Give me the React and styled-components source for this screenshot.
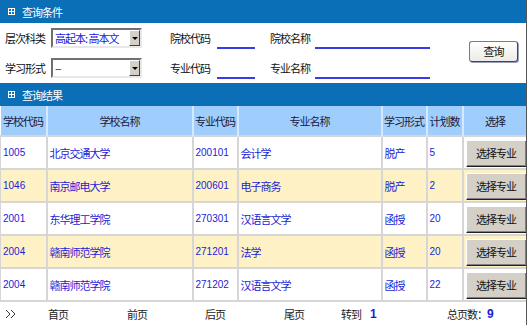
import styled, { createGlobalStyle } from "styled-components";

const GlobalStyle = createGlobalStyle`
  body {
    margin: 0;
    background: #fff;
    font-family: "Noto Sans CJK SC", "Liberation Sans", sans-serif;
    font-size: 11px;
  }
`;

const rows = [
  { school: "1005", name: "北京交通大学", code: "200101", major: "会计学", form: "脱产", plan: "5" },
  { school: "1046", name: "南京邮电大学", code: "200601", major: "电子商务", form: "脱产", plan: "2" },
  { school: "2001", name: "东华理工学院", code: "270301", major: "汉语言文学", form: "函授", plan: "20" },
  { school: "2004", name: "赣南师范学院", code: "271201", major: "法学", form: "函授", plan: "20" },
  { school: "2004", name: "赣南师范学院", code: "271202", major: "汉语言文学", form: "函授", plan: "22" },
];

function BoxIcon() {
  return (
    <svg width="7" height="7" viewBox="0 0 7 7">
      <rect x="0.5" y="0.5" width="6" height="6" fill="none" stroke="#fff" />
      <path d="M3.5 1v5M1 3.5h5" stroke="#fff" />
    </svg>
  );
}

function App() {
  return (
    <Page>
      <GlobalStyle />
      <Bar>
        <BoxIcon />
        <span>查询条件</span>
      </Bar>
      <Form>
        <Label>层次科类</Label>
        <Select>
          <span>高起本: 高本文</span>
          <Arrow />
        </Select>
        <Label $col={4}>院校代码</Label>
        <Line $col={5} />
        <Label $col={7}>院校名称</Label>
        <Line $col={8} />
        <QueryButton>查询</QueryButton>
        <Label>学习形式</Label>
        <Select>
          <span>--</span>
          <Arrow />
        </Select>
        <Label $col={4}>专业代码</Label>
        <Line $col={5} />
        <Label $col={7}>专业名称</Label>
        <Line $col={8} />
      </Form>
      <Bar>
        <BoxIcon />
        <span>查询结果</span>
      </Bar>
      <Table>
        <colgroup>
          <col width="46" />
          <col width="146" />
          <col width="45" />
          <col width="144" />
          <col width="45" />
          <col width="36" />
          <col width="64" />
        </colgroup>
        <thead>
          <tr>
            <Th>学校代码</Th>
            <Th>学校名称</Th>
            <Th>专业代码</Th>
            <Th>专业名称</Th>
            <Th>学习形式</Th>
            <Th>计划数</Th>
            <Th>选择</Th>
          </tr>
        </thead>
        <tbody>
          {rows.map((r, i) => (
            <Tr key={i} $alt={i % 2 === 1}>
              <Td $num>{r.school}</Td>
              <Td>{r.name}</Td>
              <Td $num>{r.code}</Td>
              <Td>{r.major}</Td>
              <Td>{r.form}</Td>
              <Td $num>{r.plan}</Td>
              <Td>
                <PickButton>选择专业</PickButton>
              </Td>
            </Tr>
          ))}
        </tbody>
      </Table>
      <Footer>
        <Chevrons width="12" height="10" viewBox="0 0 12 10">
          <path d="M1 1l4 4-4 4M6 1l4 4-4 4" fill="none" stroke="#334" strokeWidth="1" />
        </Chevrons>
        <FootLink $w={79}>首页</FootLink>
        <FootLink $w={78}>前页</FootLink>
        <FootLink $w={79}>后页</FootLink>
        <FootLink $w={57}>尾页</FootLink>
        <FootLink $w={29}>转到</FootLink>
        <PageNum $w={77}>1</PageNum>
        <FootLink>总页数：</FootLink>
        <PageNum>9</PageNum>
      </Footer>
    </Page>
  );
}

export default App;

const Page = styled.div`
  width: 526px;
  height: 325px;
  border-right: 1px solid #555;
  overflow: hidden;
`;

const Bar = styled.div`
  height: 23px;
  background: #0a6fb7;
  color: #fff;
  display: flex;
  align-items: center;
  gap: 7px;
  padding-left: 8px;
  font-size: 11px;
  letter-spacing: -1px;
`;

const Form = styled.div`
  height: 60px;
  box-sizing: border-box;
  padding: 4px 0 0 5px;
  display: grid;
  grid-template-columns: 46px 91px 28px 47px 38px 15px 45px 115px 39px 49px;
  grid-template-rows: 21px 21px;
  row-gap: 9px;
  align-items: center;
  color: #111;
`;

const Label = styled.div`
  grid-column: ${(p) => p.$col || 1};
  letter-spacing: -1px;
  white-space: nowrap;
`;

const Select = styled.div`
  grid-column: 2;
  height: 20px;
  box-sizing: border-box;
  border: 2px solid;
  border-color: #707070 #e8e8e8 #e8e8e8 #707070;
  background: #fff;
  display: flex;
  align-items: center;
  justify-content: space-between;
  color: #1818e0;
  letter-spacing: -1px;
  padding-left: 2px;
  white-space: nowrap;
`;

const Arrow = styled.div`
  flex: none;
  width: 11px;
  height: 16px;
  box-sizing: border-box;
  background: #d4d0c8;
  border: 1px solid;
  border-color: #fff #404040 #404040 #fff;
  position: relative;
  &::after {
    content: "";
    position: absolute;
    left: 2px;
    top: 6px;
    border-left: 3px solid transparent;
    border-right: 3px solid transparent;
    border-top: 3px solid #000;
  }
`;

const Line = styled.div`
  grid-column: ${(p) => p.$col};
  align-self: end;
  height: 0;
  border-bottom: 2px solid #3a3ae6;
  margin-bottom: -1px;
`;

const QueryButton = styled.button`
  grid-column: 10;
  grid-row: 1 / 3;
  align-self: center;
  width: 49px;
  height: 21px;
  margin-top: -3px;
  padding: 0;
  font-family: inherit;
  font-size: 11px;
  letter-spacing: -1px;
  color: #111;
  background: linear-gradient(#fff, #ecebe6);
  border: 1px solid #6d7ba8;
  border-right-color: #3b4666;
  border-bottom-color: #3b4666;
  border-radius: 3px;
  box-shadow: 1px 1px 0 #9aa0b8;
`;

const Table = styled.table`
  width: 526px;
  table-layout: fixed;
  border-collapse: collapse;
`;

const Th = styled.th`
  height: 29px;
  padding: 0;
  background: #9fcdfc;
  color: #1a1a3a;
  font-weight: normal;
  letter-spacing: -1px;
  white-space: nowrap;
  text-align: center;
  border-left: 2px solid #d4e8ff;
  &:first-child {
    border-left: none;
  }
`;

const Tr = styled.tr`
  background: ${(p) => (p.$alt ? "#fff1c6" : "#fff")};
`;

const Td = styled.td`
  height: 33px;
  padding: 0 0 0 2px;
  box-sizing: border-box;
  border: 2px solid #d6d6d6;
  border-right: none;
  color: #1c1cd6;
  white-space: nowrap;
  font-family: ${(p) => (p.$num ? '"Liberation Sans", sans-serif' : "inherit")};
  font-size: ${(p) => (p.$num ? "10px" : "11px")};
  letter-spacing: ${(p) => (p.$num ? "0" : "-1px")};
  &:first-child {
    border-left: 1px solid #d6d6d6;
  }
`;

const PickButton = styled.button`
  width: 61px;
  height: 27px;
  margin-top: 1px;
  padding: 0;
  font-family: inherit;
  font-size: 11px;
  letter-spacing: -1px;
  color: #111;
  background: #d4d0c8;
  border: 1px solid;
  border-color: #fff #202020 #202020 #fff;
  box-shadow: inset -1px -1px 0 #808080;
`;

const Footer = styled.div`
  height: 23px;
  display: flex;
  align-items: center;
  padding-left: 5px;
  color: #222;
  letter-spacing: -1px;
`;

const Chevrons = styled.svg`
  flex: none;
  margin-right: 31px;
`;

const FootLink = styled.span`
  flex: none;
  width: ${(p) => (p.$w ? `${p.$w}px` : "auto")};
  white-space: nowrap;
`;

const PageNum = styled.span`
  flex: none;
  width: ${(p) => (p.$w ? `${p.$w}px` : "auto")};
  color: #1c1cd6;
  font-weight: bold;
  font-family: "Liberation Sans", sans-serif;
  font-size: 12px;
`;
